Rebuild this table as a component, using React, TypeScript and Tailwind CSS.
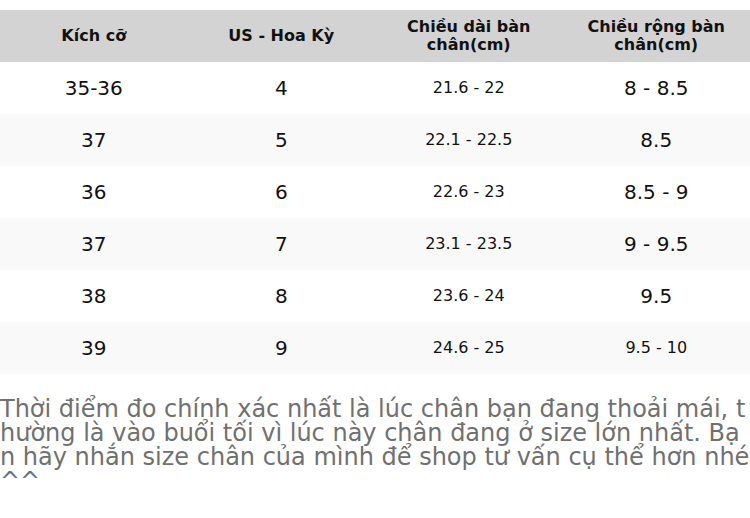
const rows = [
  { size: "35-36", us: "4", len: "21.6 - 22", wid: "8 - 8.5", small: false },
  { size: "37", us: "5", len: "22.1 - 22.5", wid: "8.5", small: false },
  { size: "36", us: "6", len: "22.6 - 23", wid: "8.5 - 9", small: false },
  { size: "37", us: "7", len: "23.1 - 23.5", wid: "9 - 9.5", small: false },
  { size: "38", us: "8", len: "23.6 - 24", wid: "9.5", small: false },
  { size: "39", us: "9", len: "24.6 - 25", wid: "9.5 - 10", small: true },
];

export default function App() {
  return (
    <div className="w-[750px] h-[518px] bg-white overflow-hidden pt-[10px] font-['DejaVu_Sans',sans-serif]">
      <div className="grid grid-cols-4 h-[52px] bg-[#d3d3d3] text-[16px] leading-[18px] font-bold text-[#111] text-center">
        <div className="flex items-center justify-center">Kích cỡ</div>
        <div className="flex items-center justify-center">US - Hoa Kỳ</div>
        <div className="flex items-center justify-center px-4">Chiều dài bàn chân(cm)</div>
        <div className="flex items-center justify-center px-4">Chiều rộng bàn chân(cm)</div>
      </div>
      {rows.map((r, i) => (
        <div
          key={i}
          className={`grid grid-cols-4 h-[52px] text-center text-[#111] ${i % 2 === 1 ? "bg-[#f9f9f9]" : "bg-white"}`}
        >
          <div className="flex items-center justify-center text-[20px]">{r.size}</div>
          <div className="flex items-center justify-center text-[20px]">{r.us}</div>
          <div className="flex items-center justify-center text-[16px]">{r.len}</div>
          <div className={`flex items-center justify-center ${r.small ? "text-[16px]" : "text-[20px]"}`}>{r.wid}</div>
        </div>
      ))}
      <p className="mt-[23px] text-[24px] leading-[24px] text-[#707070] break-all">
        Thời điểm đo chính xác nhất là lúc chân bạn đang thoải mái, thường là vào buổi tối vì lúc này chân đang ở size lớn nhất. Bạn hãy nhắn size chân của mình để shop tư vấn cụ thể hơn nhé ^^
      </p>
    </div>
  );
}
